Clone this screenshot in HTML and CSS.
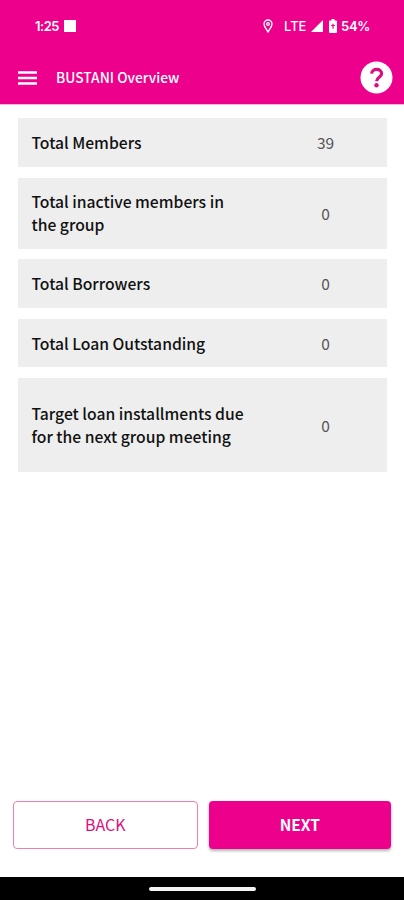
FILE: index.html
```html
<!DOCTYPE html>
<html lang="en">
<head>
  <meta charset="UTF-8" />
  <meta name="viewport" content="width=device-width, initial-scale=1.0"/>
  <title>BUSTANI Overview</title>
  <link rel="stylesheet" href="styles.css">
</head>
<body>

  <header>
    <div class="status-bar">
      <span class="time">1:25</span>
      <span class="square"></span>
      <svg class="pin" width="10" height="14" viewBox="0 0 10 14" fill="none" stroke="#fff">
        <path d="M5 12.800C3.600 10.200 1 7.800 1 5a4 4 0 0 1 8 0c0 2.800-2.600 5.200-4 7.800z" stroke-width="1.400"/>
        <circle cx="5" cy="5" r="1.300" stroke-width="1.200"/>
      </svg>
      <span class="network">LTE</span>
      <svg class="signal" width="12" height="12" viewBox="0 0 12 12"><path d="M12 0v12H0z" fill="#fff"/></svg>
      <svg class="battery" width="8" height="14" viewBox="0 0 8 14">
        <path d="M2.500 0h3v1.500H7a1 1 0 0 1 1 1V13a1 1 0 0 1-1 1H1a1 1 0 0 1-1-1V2.500a1 1 0 0 1 1-1h1.500z" fill="#fff"/>
        <path d="M4 4.700v5M2.200 6.500h3.600" stroke="#ec008c" stroke-width="1.200"/>
      </svg>
      <span class="percent">54%</span>
    </div>
    <div class="app-bar">
      <svg class="menu" width="19" height="14" viewBox="0 0 19 14"><path d="M0 1.500h19M0 7h19M0 12.500h19" stroke="#fff" stroke-width="2.400"/></svg>
      <h1>BUSTANI Overview</h1>
      <svg class="help" width="33" height="33" viewBox="0 0 33 33">
        <circle cx="16.500" cy="16.500" r="16" fill="#fff"/>
        <path d="M11.600 12.600c.2-5.600 10-5.600 10 .1 0 3.600-5 3.700-5 7.500" fill="none" stroke="#d9107f" stroke-width="3.200"/>
        <circle cx="16.500" cy="24.300" r="2.200" fill="#d9107f"/>
      </svg>
    </div>
  </header>

  <main>
    <div class="card">
      <span class="label">Total Members</span>
      <span class="value">39</span>
    </div>
    <div class="card two-line">
      <span class="label">Total inactive members in the group</span>
      <span class="value">0</span>
    </div>
    <div class="card">
      <span class="label">Total Borrowers</span>
      <span class="value">0</span>
    </div>
    <div class="card">
      <span class="label">Total Loan Outstanding</span>
      <span class="value">0</span>
    </div>
    <div class="card tall">
      <span class="label">Target loan installments due for the next group meeting</span>
      <span class="value">0</span>
    </div>
  </main>

  <div class="actions">
    <button class="back">BACK</button>
    <button class="next">NEXT</button>
  </div>

  <footer><div class="handle"></div></footer>

</body>
</html>
```

FILE: styles.css
```css
* {
  box-sizing: border-box;
}

body {
  font-family: "Noto Sans CJK SC", "Noto Sans", sans-serif;
  background: #fff;
  margin: 0;
  height: 900px;
  display: flex;
  flex-direction: column;
}

header {
  background: #ec008c;
  color: #fff;
  height: 105px;
  border-bottom: 1px solid #f9b5d9;
}

.status-bar {
  display: flex;
  align-items: center;
  height: 51px;
  padding: 0 34px 0 35px;
  font-family: Inter, sans-serif;
  font-size: 13px;
  font-weight: 600;
}

.time {
  width: 29px;
  letter-spacing: -0.5px;
}

.square {
  width: 12px;
  height: 12px;
  background: #fff;
}

.pin {
  margin-left: auto;
}

.network {
  width: 27px;
  margin-left: 11px;
  font-weight: 500;
}

.battery {
  margin-left: 6px;
}

.percent {
  width: 29px;
  margin-left: 4px;
  letter-spacing: -0.3px;
}

.app-bar {
  display: flex;
  align-items: center;
  height: 53px;
  padding: 0 11px 0 18px;
}

h1 {
  margin: -2px 0 0 19px;
  font-size: 13.8px;
  font-weight: 500;
}

.help {
  margin-left: auto;
}

main {
  flex: 1;
  display: flex;
  flex-direction: column;
  gap: 10.8px;
  padding: 13.4px 17px 0 18px;
}

.card {
  display: flex;
  align-items: center;
  height: 48.5px;
  padding-left: 13.5px;
  background: #eee;
  color: #111;
  font-size: 15.7px;
  line-height: 23px;
}

.two-line {
  height: 71px;
}

.tall {
  height: 94px;
}

.label {
  width: 233px;
  padding-right: 15px;
  font-weight: 500;
}

.value {
  width: 123px;
  text-align: center;
  font-size: 15.5px;
  font-weight: 400;
  color: #555;
}

.actions {
  display: flex;
  gap: 11px;
  padding: 0 13px 28px;
}

button {
  flex: 1;
  height: 48px;
  padding: 0 0 3px;
  border: none;
  border-radius: 4px;
  font-family: inherit;
  font-size: 16px;
}

.back {
  border: 1px solid #ef7fae;
  background: #fff;
  color: #d9107f;
  font-weight: 400;
}

.next {
  background: #ec008c;
  color: #fff;
  font-size: 15.5px;
  font-weight: 700;
  box-shadow: 0 2px 3px rgba(0, 0, 0, 0.3);
}

footer {
  display: flex;
  justify-content: center;
  align-items: center;
  height: 23px;
  background: #000;
}

.handle {
  width: 107px;
  height: 4px;
  border-radius: 2px;
  background: #f4f4f4;
}
```
